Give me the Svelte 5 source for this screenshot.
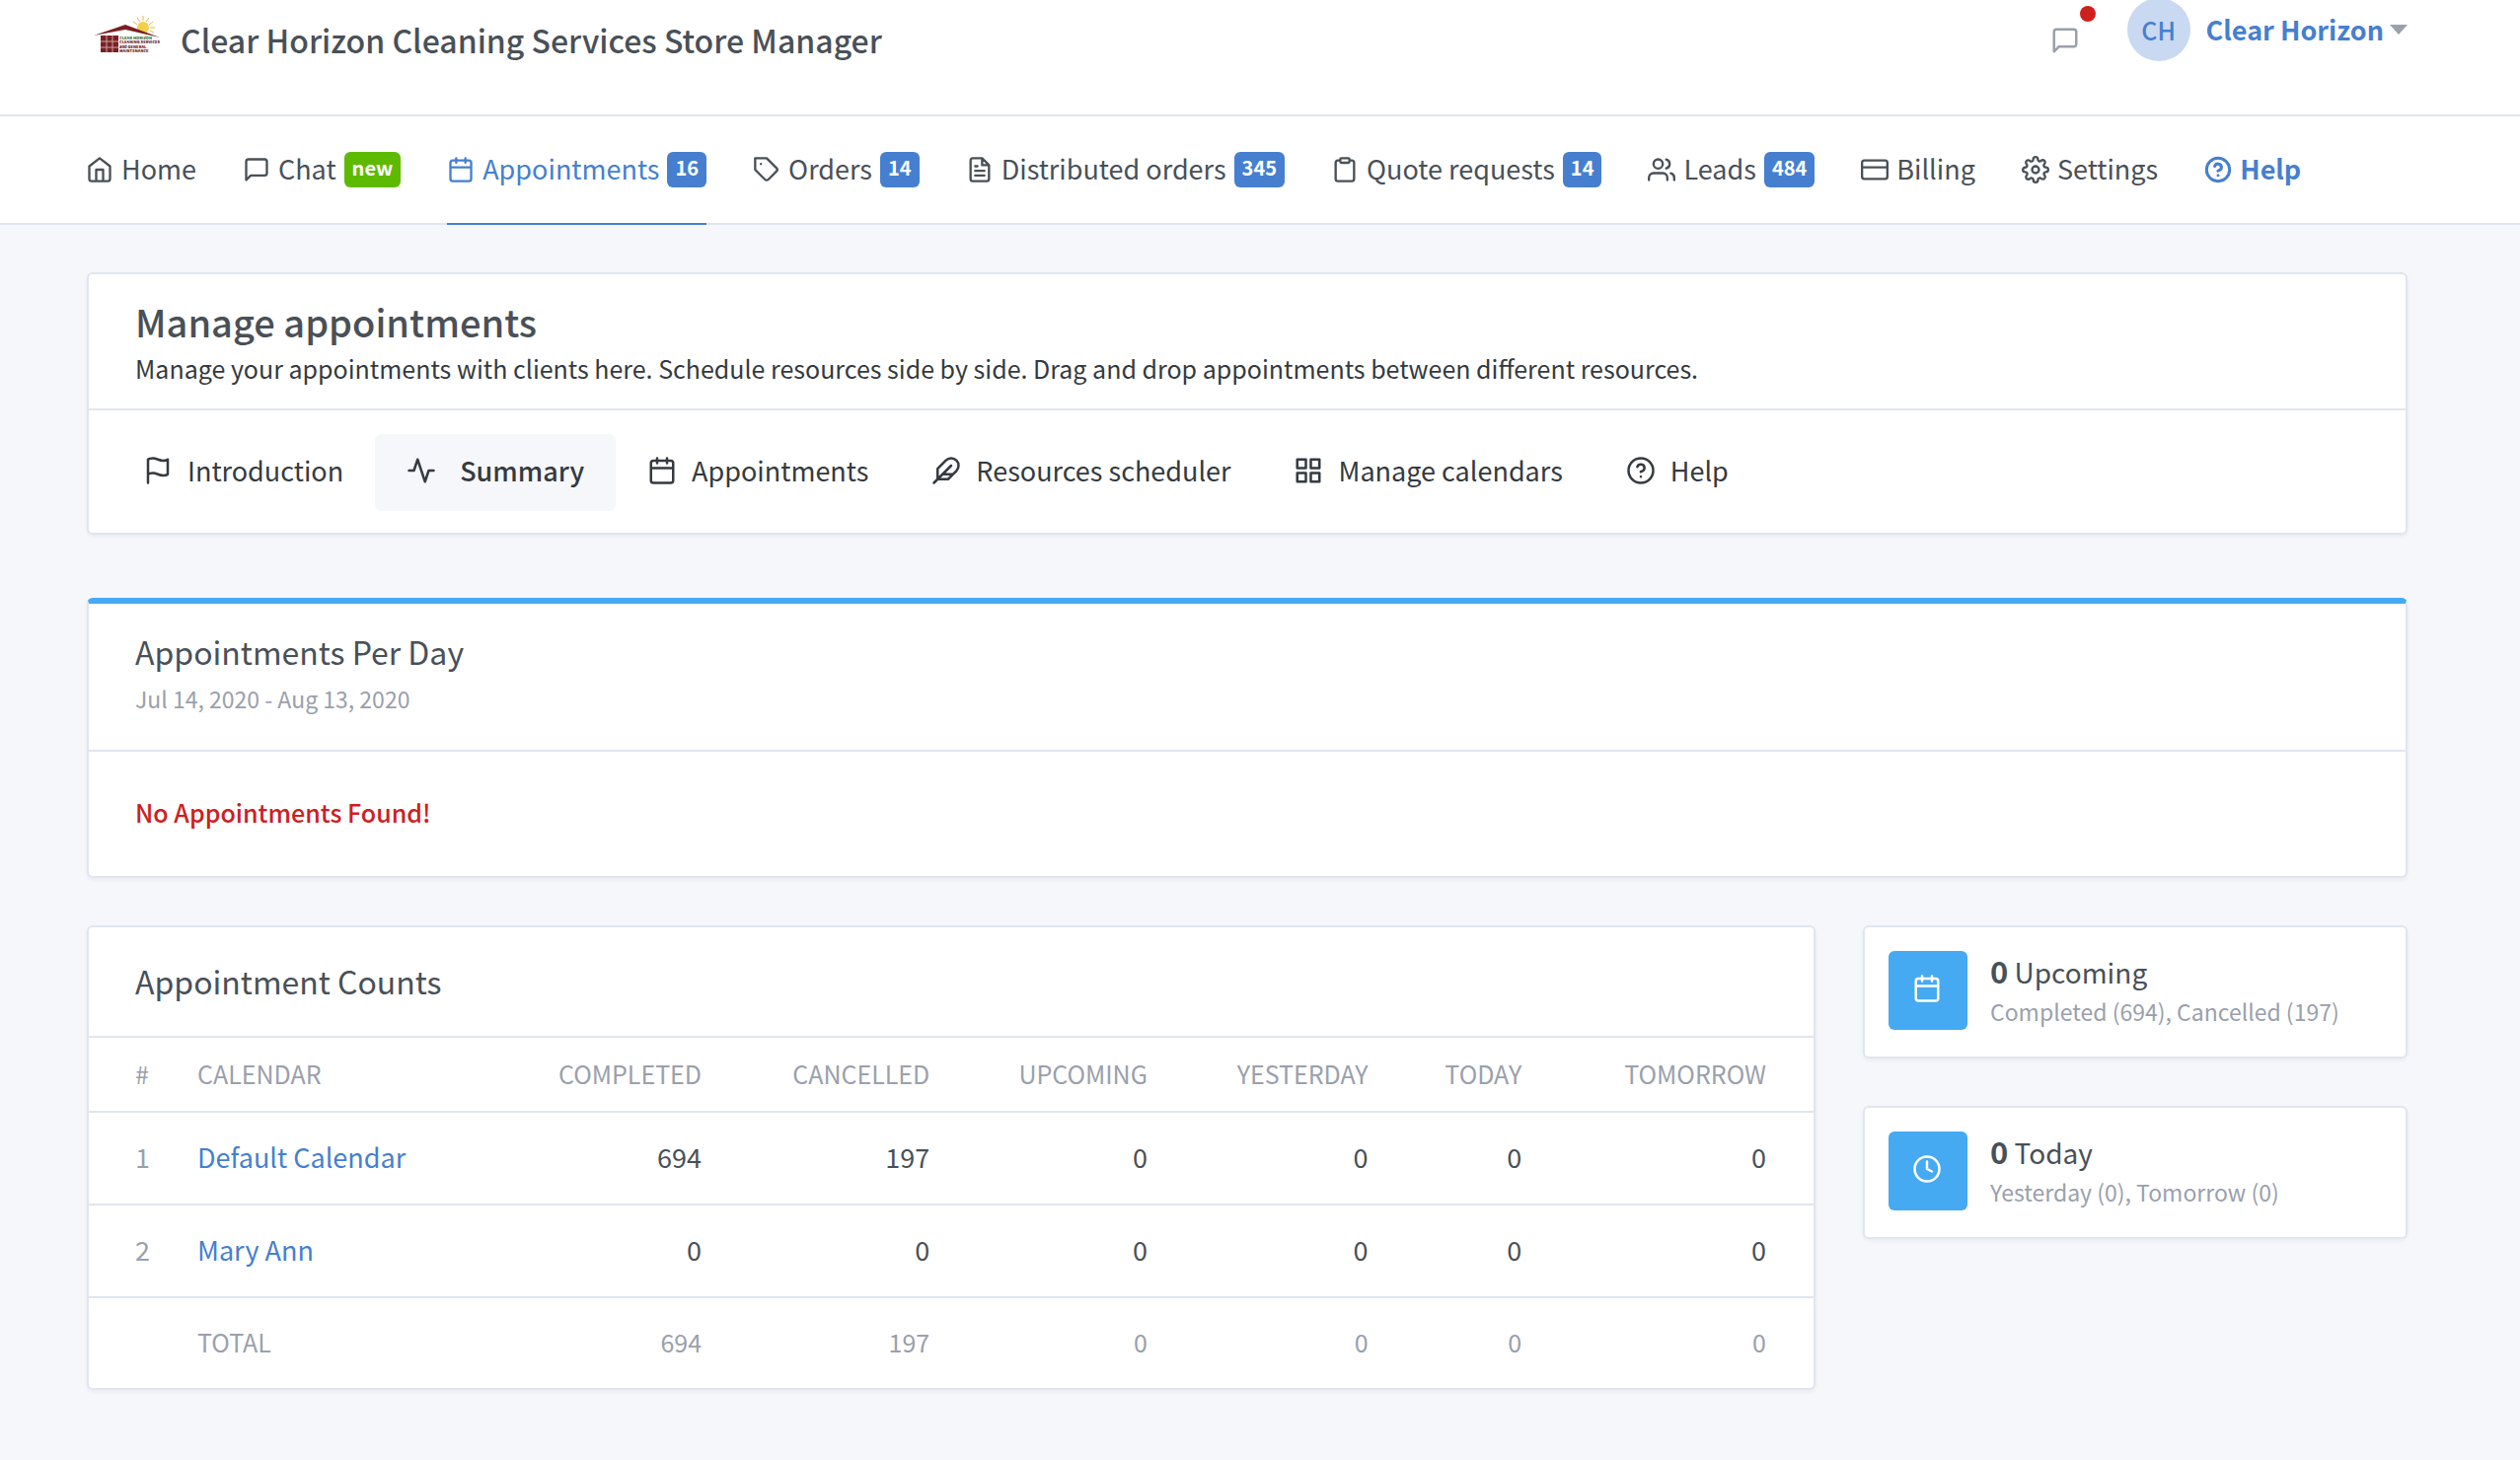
<script lang="ts">
  const icons: Record<string, string> = {
    home: 'M3 9l9-7 9 7v11a2 2 0 0 1-2 2H5a2 2 0 0 1-2-2z M9 22V12h6v10',
    message: 'M21 15a2 2 0 0 1-2 2H7l-4 4V5a2 2 0 0 1 2-2h14a2 2 0 0 1 2 2z',
    calendar: 'M5 4h14a2 2 0 0 1 2 2v14a2 2 0 0 1-2 2H5a2 2 0 0 1-2-2V6a2 2 0 0 1 2-2z M16 2v4 M8 2v4 M3 10h18',
    tag: 'M20.59 13.41l-7.17 7.17a2 2 0 0 1-2.83 0L2 12V2h10l8.59 8.59a2 2 0 0 1 0 2.82z M7 7h.01',
    file: 'M14 2H6a2 2 0 0 0-2 2v16a2 2 0 0 0 2 2h12a2 2 0 0 0 2-2V8z M14 2v6h6 M16 13H8 M16 17H8 M10 9H8',
    clipboard: 'M16 4h2a2 2 0 0 1 2 2v14a2 2 0 0 1-2 2H6a2 2 0 0 1-2-2V6a2 2 0 0 1 2-2h2 M9 2h6a1 1 0 0 1 1 1v2a1 1 0 0 1-1 1H9a1 1 0 0 1-1-1V3a1 1 0 0 1 1-1z',
    users: 'M17 21v-2a4 4 0 0 0-4-4H5a4 4 0 0 0-4 4v2 M13 7a4 4 0 1 1-8 0a4 4 0 1 1 8 0z M23 21v-2a4 4 0 0 0-3-3.87 M16 3.13a4 4 0 0 1 0 7.75',
    card: 'M3 4h18a2 2 0 0 1 2 2v12a2 2 0 0 1-2 2H3a2 2 0 0 1-2-2V6a2 2 0 0 1 2-2z M1 10h22',
    settings: 'M15 12a3 3 0 1 1-6 0a3 3 0 1 1 6 0z M19.4 15a1.65 1.65 0 0 0 .33 1.82l.06.06a2 2 0 0 1 0 2.83 2 2 0 0 1-2.83 0l-.06-.06a1.65 1.65 0 0 0-1.82-.33 1.65 1.65 0 0 0-1 1.51V21a2 2 0 0 1-2 2 2 2 0 0 1-2-2v-.09A1.65 1.65 0 0 0 9 19.4a1.65 1.65 0 0 0-1.82.33l-.06.06a2 2 0 0 1-2.83 0 2 2 0 0 1 0-2.83l.06-.06a1.65 1.65 0 0 0 .33-1.82 1.65 1.65 0 0 0-1.51-1H3a2 2 0 0 1-2-2 2 2 0 0 1 2-2h.09A1.65 1.65 0 0 0 4.6 9a1.65 1.65 0 0 0-.33-1.82l-.06-.06a2 2 0 0 1 0-2.83 2 2 0 0 1 2.83 0l.06.06a1.65 1.65 0 0 0 1.82.33H9a1.65 1.65 0 0 0 1-1.51V3a2 2 0 0 1 2-2 2 2 0 0 1 2 2v.09a1.65 1.65 0 0 0 1 1.51 1.65 1.65 0 0 0 1.82-.33l.06-.06a2 2 0 0 1 2.83 0 2 2 0 0 1 0 2.83l-.06.06a1.65 1.65 0 0 0-.33 1.82V9a1.65 1.65 0 0 0 1.51 1H21a2 2 0 0 1 2 2 2 2 0 0 1-2 2h-.09a1.65 1.65 0 0 0-1.51 1z',
    help: 'M22 12a10 10 0 1 1-20 0a10 10 0 1 1 20 0z M9.09 9a3 3 0 0 1 5.83 1c0 2-3 3-3 3 M12 17h.01',
    flag: 'M4 15s1-1 4-1 5 2 8 2 4-1 4-1V3s-1 1-4 1-5-2-8-2-4 1-4 1z M4 22v-7',
    activity: 'M22 12h-4l-3 9L9 3l-3 9H2',
    feather: 'M20.24 12.24a6 6 0 0 0-8.49-8.49L5 10.5V19h8.5z M16 8L2 22 M17.5 15H9',
    grid: 'M3 3h7v7H3z M14 3h7v7h-7z M14 14h7v7h-7z M3 14h7v7H3z',
    clock: 'M22 12a10 10 0 1 1-20 0a10 10 0 1 1 20 0z M12 6v6l4 2',
  };

  const nav = [
    { icon: 'home', label: 'Home' },
    { icon: 'message', label: 'Chat', badge: 'new', green: true },
    { icon: 'calendar', label: 'Appointments', badge: '16', active: true },
    { icon: 'tag', label: 'Orders', badge: '14' },
    { icon: 'file', label: 'Distributed orders', badge: '345' },
    { icon: 'clipboard', label: 'Quote requests', badge: '14' },
    { icon: 'users', label: 'Leads', badge: '484' },
    { icon: 'card', label: 'Billing' },
    { icon: 'settings', label: 'Settings' },
    { icon: 'help', label: 'Help', strong: true },
  ];

  const tabs = [
    { icon: 'flag', label: 'Introduction' },
    { icon: 'activity', label: 'Summary', active: true },
    { icon: 'calendar', label: 'Appointments' },
    { icon: 'feather', label: 'Resources scheduler' },
    { icon: 'grid', label: 'Manage calendars' },
    { icon: 'help', label: 'Help' },
  ];

  const columns = ['Completed', 'Cancelled', 'Upcoming', 'Yesterday', 'Today', 'Tomorrow'];
  const rows = [
    { name: 'Default Calendar', values: [694, 197, 0, 0, 0, 0] },
    { name: 'Mary Ann', values: [0, 0, 0, 0, 0, 0] },
  ];
  const totals = columns.map((_, i) => rows.reduce((sum, row) => sum + row.values[i], 0));

  const stats = [
    { icon: 'calendar', count: 0, label: 'Upcoming', detail: 'Completed (694), Cancelled (197)' },
    { icon: 'clock', count: 0, label: 'Today', detail: 'Yesterday (0), Tomorrow (0)' },
  ];
</script>

{#snippet icon(name: string)}
  <svg class="icon" viewBox="0 0 24 24" aria-hidden="true"><path d={icons[name]} /></svg>
{/snippet}

<header class="top">
  <a class="brand" href="#home">
    <svg class="logo" viewBox="0 3 72 48" aria-hidden="true">
      <path d="M51 3v5 M45 5l3 4 M57 5l-3 4 M41 9l4 3 M61 9l-4 3 M63 15h-5 M62 20l-4-2" stroke="#e8b84a" />
      <circle cx="51" cy="15" r="6" fill="#f6cf4a" />
      <path d="M1 23L33 12L68 25L33 17Z" fill="#7a1f24" />
      <path d="M8 23H26V40H8z" fill="#7a1f24" />
      <path d="M14 23v17 M20 23v17 M8 29h18 M8 35h18" stroke="#c9a3a5" />
      <g font-size="4" font-weight="900">
        <text x="27" y="27" fill="#2f6d36">CLEAR HORIZON</text>
        <text x="27" y="31" fill="#6a1318">CLEANING SERVICES</text>
        <text x="27" y="36" fill="#6a1318">and GENERAL</text>
        <text x="27" y="40" fill="#6a1318">MAINTENANCE</text>
      </g>
    </svg>
    <h2>Clear Horizon Cleaning Services Store Manager</h2>
  </a>
  <div class="tools">
    <button class="bell" aria-label="Messages">{@render icon('message')}<span class="dot"></span></button>
    <button class="user">
      <span class="avatar">CH</span>
      <span class="name">Clear Horizon</span>
      <svg class="caret" viewBox="0 0 18 10" aria-hidden="true"><path d="M0 0H18L9 10z" /></svg>
    </button>
  </div>
</header>

<nav class="menu" aria-label="Main">
  {#each nav as item}
    <a href="#{item.icon}" class:active={item.active} class:strong={item.strong}>
      {@render icon(item.icon)}<span class="label">{item.label}</span>
      {#if item.badge}<span class="badge" class:green={item.green}>{item.badge}</span>{/if}
    </a>
  {/each}
</nav>

<main>
  <section class="card intro">
    <div class="lead">
      <h1>Manage appointments</h1>
      <p>Manage your appointments with clients here. Schedule resources side by side. Drag and drop appointments between different resources.</p>
    </div>
    <nav class="tabs" aria-label="Appointments">
      {#each tabs as tab}
        <a href="#{tab.icon}" class:active={tab.active}>{@render icon(tab.icon)}<span>{tab.label}</span></a>
      {/each}
    </nav>
  </section>

  <section class="card perday">
    <div class="head">
      <h3>Appointments Per Day</h3>
      <div class="range">Jul 14, 2020 - Aug 13, 2020</div>
    </div>
    <p class="empty">No Appointments Found!</p>
  </section>

  <div class="columns">
    <section class="card counts">
      <h3>Appointment Counts</h3>
      <table>
        <thead>
          <tr>
            <th>#</th>
            <th>Calendar</th>
            {#each columns as column}<th class="num">{column}</th>{/each}
          </tr>
        </thead>
        <tbody>
          {#each rows as row, i}
            <tr>
              <td class="muted">{i + 1}</td>
              <td><a href="#calendar-{i + 1}">{row.name}</a></td>
              {#each row.values as value}<td class="num">{value}</td>{/each}
            </tr>
          {/each}
        </tbody>
        <tfoot>
          <tr>
            <td></td>
            <td>Total</td>
            {#each totals as total}<td class="num">{total}</td>{/each}
          </tr>
        </tfoot>
      </table>
    </section>

    <aside>
      {#each stats as stat}
        <div class="card stat">
          <span class="stamp">{@render icon(stat.icon)}</span>
          <div>
            <h4><strong>{stat.count}</strong> {stat.label}</h4>
            <small>{stat.detail}</small>
          </div>
        </div>
      {/each}
    </aside>
  </div>
</main>

<style>
  :global(body) {
    background: #f5f7fb;
    color: #495057;
    font: 400 27px/44px "Noto Sans CJK SC", "Noto Sans", sans-serif;
  }
  :global(*) { box-sizing: border-box; }
  h1, h2, h3, h4, p { margin: 0; }
  a { color: #467fcf; text-decoration: none; }
  button { border: 0; padding: 0; background: none; font: inherit; color: inherit; }

  .icon {
    flex: none;
    width: 30px;
    height: 30px;
    fill: none;
    stroke: currentColor;
    stroke-width: 2;
    stroke-linecap: round;
    stroke-linejoin: round;
  }

  .top {
    display: flex;
    justify-content: space-between;
    align-items: flex-start;
    height: 118px;
    padding: 0 114px 0 88px;
    background: #fff;
    border-bottom: 2px solid #e0e5ef;
    overflow: hidden;
  }
  .brand { display: flex; align-items: center; gap: 17px; height: 80px; padding-left: 6px; }
  .logo { width: 72px; height: 48px; }
  h2 { font-size: 32px; font-weight: 500; color: #495057; }
  .tools { display: flex; align-items: flex-start; gap: 48px; margin-top: -2px; }
  .bell { position: relative; display: flex; padding-top: 28px; color: #9aa0ac; }
  .dot {
    position: absolute;
    top: 8px;
    right: -16px;
    width: 16px;
    height: 16px;
    border-radius: 50%;
    background: #cd201f;
  }
  .user { display: flex; align-items: center; color: #467fcf; }
  .avatar {
    width: 64px;
    border-radius: 50%;
    background: #c8d9f1;
    font-size: 25px;
    font-weight: 500;
    line-height: 64px;
    text-align: center;
  }
  .name { margin: 0 6px 0 16px; font-weight: 700; }
  .caret { width: 18px; height: 10px; fill: #9aa0ac; }

  .menu {
    display: flex;
    gap: 47px;
    height: 110px;
    padding: 0 114px 0 87px;
    background: #fff;
    border-bottom: 2px solid #e0e5ef;
  }
  .menu a {
    display: flex;
    align-items: center;
    gap: 8px;
    margin-bottom: -2px;
    border-bottom: 2px solid transparent;
    color: #495057;
    white-space: nowrap;
  }
  .menu .icon { width: 28px; height: 28px; }
  .menu a.active { color: #467fcf; border-color: #467fcf; }
  .menu a.strong { color: #467fcf; font-weight: 700; }
  .menu a.strong .icon { stroke-width: 2.6; }
  .label { padding-bottom: 2px; }
  .badge {
    padding: 0 8px 4px;
    border-radius: 6px;
    background: #467fcf;
    color: #fff;
    font-size: 20px;
    font-weight: 700;
    line-height: 32px;
  }
  .badge.green { background: #5eba00; }

  main { padding: 48px 114px 72px 88px; }
  .card {
    background: #fff;
    border: 2px solid #e0e5ef;
    border-radius: 6px;
    box-shadow: 0 2px 4px rgba(0, 0, 0, 0.05);
  }

  .intro { margin-bottom: 64px; }
  .lead { padding: 24px 47px 18px; border-bottom: 2px solid #e0e5ef; }
  h1 { font-size: 38px; font-weight: 500; line-height: 48px; }
  .lead p { color: #343a40; font-size: 25px; line-height: 46px; }
  .tabs { display: flex; padding: 24px 23px 22px; }
  .tabs a {
    display: flex;
    align-items: center;
    gap: 15px;
    height: 78px;
    padding: 0 32px 4px;
    border-radius: 6px;
    color: #343a40;
  }
  .tabs a.active { gap: 24px; background: #f5f7fb; font-weight: 500; }

  .perday { margin-bottom: 48px; border-top: 6px solid #45aaf2; }
  .head { padding: 24px 47px 28px; border-bottom: 2px solid #e0e5ef; }
  h3 { font-size: 32px; font-weight: 400; line-height: 48px; }
  .range { color: #9aa0ac; font-size: 23px; line-height: 48px; }
  .empty { padding: 39px 47px 43px; color: #cd201f; font-size: 25px; font-weight: 500; }

  .columns { display: grid; grid-template-columns: minmax(0, 1752fr) minmax(0, 552fr); gap: 48px; align-items: start; }
  .counts h3 { padding: 30px 47px 32px; }
  table { width: 100%; border-collapse: collapse; }
  th, td { padding: 0 24px 3px; border-top: 2px solid #e0e5ef; text-align: left; }
  th:first-child, td:first-child { width: 1px; padding-left: 47px; }
  th:last-child, td:last-child { padding-left: 28px; padding-right: 48px; }
  th { height: 76px; color: #9aa0ac; font-size: 25px; font-weight: 400; text-transform: uppercase; }
  td { height: 94px; }
  .num { text-align: right; }
  .muted { color: #9aa0ac; }
  tfoot td { height: 92px; color: #9aa0ac; font-size: 25px; text-transform: uppercase; }

  aside { display: grid; gap: 48px; }
  .stat { display: flex; gap: 23px; padding: 24px 24px 26px; }
  .stamp {
    display: flex;
    align-items: center;
    justify-content: center;
    width: 80px;
    height: 80px;
    flex: none;
    padding: 0 2px 4px 0;
    border-radius: 6px;
    background: #45aaf2;
    color: #fff;
  }
  h4 { font-size: 28px; font-weight: 400; line-height: 40px; }
  h4 strong { font-size: 31px; font-weight: 700; }
  small { display: block; color: #9aa0ac; font-size: 23px; line-height: 40px; white-space: nowrap; }
</style>
